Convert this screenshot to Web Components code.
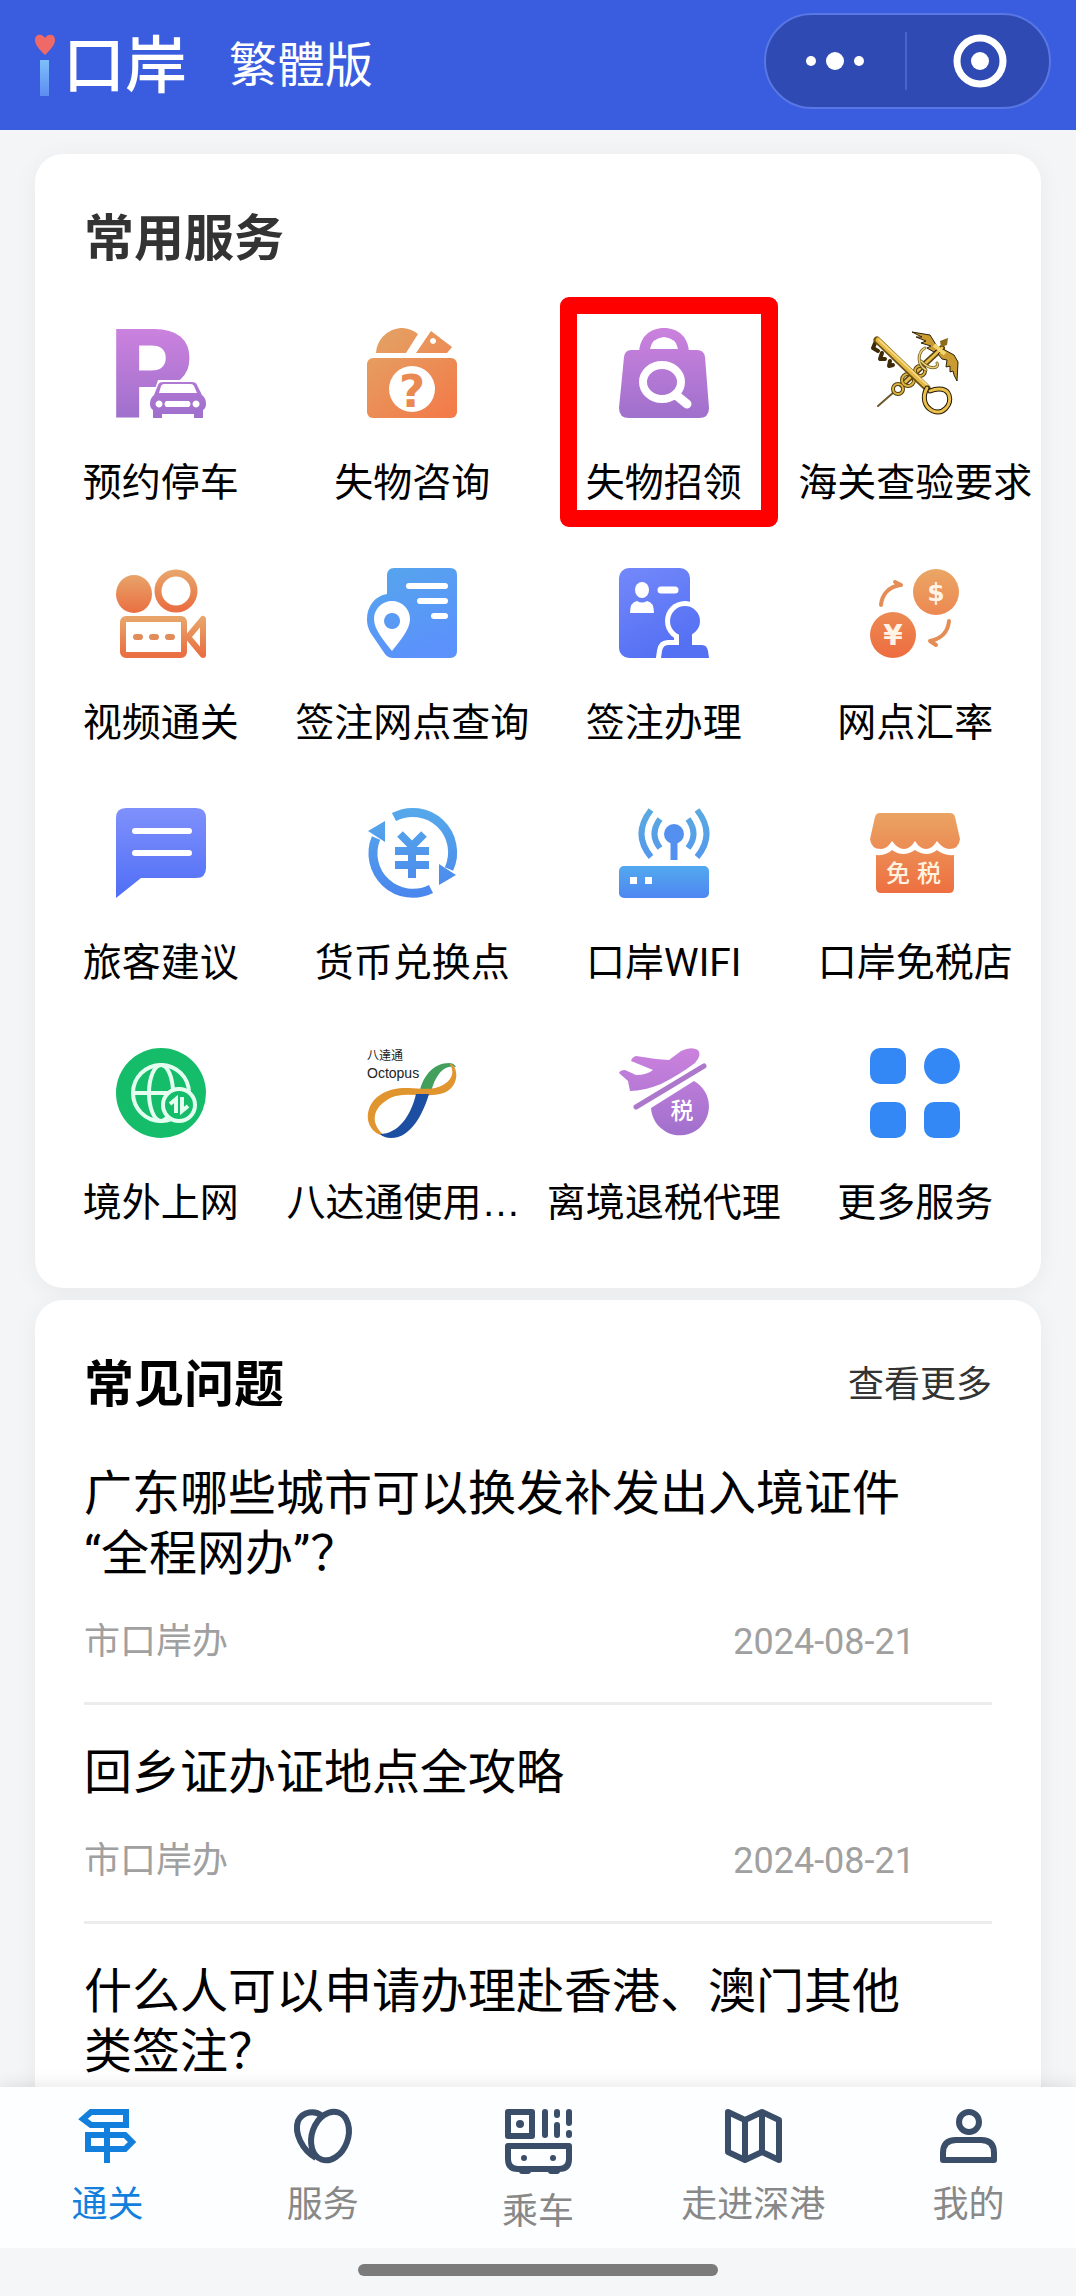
<!DOCTYPE html>
<html lang="zh-CN">
<head>
<meta charset="utf-8">
<meta name="viewport" content="width=device-width, initial-scale=1">
<title>i口岸</title>
<style>
    body {
        margin: 0;
        font-family: Roboto, "Noto Sans CJK SC", sans-serif;
        color: #000;
    }
</style>
</head>
<body>

<port-app>
    <port-header slot="header"></port-header>

    <port-card>
        <span slot="title">常用服务</span>
        <port-services>
            <port-service icon="parking">预约停车</port-service>
            <port-service icon="lost">失物咨询</port-service>
            <port-service icon="bag" marked>失物招领</port-service>
            <port-service icon="customs">海关查验要求</port-service>
            <port-service icon="video">视频通关</port-service>
            <port-service icon="place">签注网点查询</port-service>
            <port-service icon="permit">签注办理</port-service>
            <port-service icon="rate">网点汇率</port-service>
            <port-service icon="advice">旅客建议</port-service>
            <port-service icon="exchange">货币兑换点</port-service>
            <port-service icon="wifi">口岸WIFI</port-service>
            <port-service icon="shop">口岸免税店</port-service>
            <port-service icon="globe">境外上网</port-service>
            <port-service icon="octopus" clipped>八达通使用…</port-service>
            <port-service icon="refund">离境退税代理</port-service>
            <port-service icon="more">更多服务</port-service>
        </port-services>
    </port-card>

    <port-card strong>
        <span slot="title">常见问题</span>
        <port-more slot="action">查看更多</port-more>
        <port-question office="市口岸办" date="2024-08-21">广东哪些城市可以换发补发出入境证件“全程网办”？</port-question>
        <port-question office="市口岸办" date="2024-08-21">回乡证办证地点全攻略</port-question>
        <port-question>什么人可以申请办理赴香港、澳门其他类签注？</port-question>
    </port-card>

    <port-tabs slot="footer">
        <port-tab icon="sign" active>通关</port-tab>
        <port-tab icon="heart">服务</port-tab>
        <port-tab icon="bus">乘车</port-tab>
        <port-tab icon="map">走进深港</port-tab>
        <port-tab icon="user">我的</port-tab>
    </port-tabs>
</port-app>

<script>
const gradient = (from, to, x2 = 0) => `
    <defs>
        <linearGradient id="g" gradientUnits="userSpaceOnUse" x1="0" y1="0" x2="${x2}" y2="90">
            <stop offset="0" stop-color="${from}"/>
            <stop offset="1" stop-color="${to}"/>
        </linearGradient>
    </defs>`;

const purple = gradient("#cb82de", "#9f70cc");
const orange = gradient("#eaa765", "#ee6c3f");
const orangeSide = gradient("#e2a566", "#f27d4b", 70);
const sky = gradient("#55a6ec", "#5b92fb", 40);
const indigo = gradient("#7388fa", "#5470f3", 40);

// all on a 90 x 90 grid
const serviceIcons = {
    parking: `${purple}
        <text x="-11" y="90" font-family="DejaVu Sans" font-weight="bold" font-size="122" fill="url(#g)">P</text>
        <path d="M32 90V76Q32 67 38 64L42 52H84L90 66V90Z" fill="#fff"/>
        <path fill="url(#g)" fill-rule="evenodd" d="M38 67L42 57Q43 54 47 54H76Q80 54 81 57L86 67Q90 70 90 76Q90 80 87 82V90H78V86H46V90H37V82Q34 80 34 76Q34 70 38 67ZM43 65H81L78 58Q77 56 75 56H48Q46 56 45 58ZM43 72.500a3.500 3.500 0 1 0 .1 0ZM80 72.500a3.500 3.500 0 1 0 .1 0ZM50 73q-3 3 0 6H73q3-3 0-6Z"/>`,
    lost: `${orangeSide}
        <path d="M9 25C10 10 22 0 36 0Q45 1 51 6L39 25Z" fill="url(#g)"/>
        <path fill-rule="evenodd" d="M49 25L64 3L85 19L80 25ZM66 10a3 3 0 1 0 .1 0Z" fill="url(#g)"/>
        <rect y="30" width="90" height="60" rx="6" fill="url(#g)"/>
        <circle cx="45" cy="61" r="23" fill="#fff"/>
        <text x="45" y="79" text-anchor="middle" font-family="DejaVu Sans" font-weight="bold" font-size="45" fill="#e88a52">?</text>`,
    bag: `${purple}
        <path d="M20 26C20 9 31 0 45 0S70 9 70 26Z" fill="url(#g)"/>
        <path d="M12 22H78Q85 22 86 29L90 80Q90 90 80 90H10Q0 90 0 80L5 29Q6 22 12 22Z" fill="url(#g)"/>
        <path d="M31 21Q33 10 45 9Q57 10 59 21Z" fill="#fff"/>
        <ellipse cx="43" cy="54" rx="19" ry="17" fill="none" stroke="#fff" stroke-width="8"/>
        <path d="M57 67L68 76" stroke="#fff" stroke-width="9" stroke-linecap="round"/>`,
    customs: `
        <g fill="none" stroke-linecap="round" stroke-linejoin="round">
            <path d="M8 78L24 64" stroke="#6b5a2c" stroke-width="2"/>
            <path d="M32 57L72 20" stroke="#5a4510" stroke-width="6"/>
            <path d="M32 57L72 20" stroke="#e8bd4c" stroke-width="3"/>
            <g stroke="#51400f" stroke-width="4"><circle cx="28" cy="61" r="5"/><circle cx="38" cy="52" r="6"/><circle cx="50" cy="43" r="5"/></g>
            <g stroke="#dfb443" stroke-width="2"><circle cx="28" cy="61" r="5"/><circle cx="38" cy="52" r="6"/><circle cx="50" cy="43" r="5"/></g>
            <path d="M56 42C46 36 48 24 55 20M51 33C60 43 70 40 67 35" stroke="#6a551a" stroke-width="3"/>
            <path d="M56 42C46 36 48 24 55 20M51 33C60 43 70 40 67 35" stroke="#ecd27a" stroke-width="1.500"/>
            <path d="M6 13L3 20L8 23M12 25L10 31L15 31M20 33L19 38L23 37" stroke="#3d2b08" stroke-width="4"/>
            <path d="M7 12L57 60" stroke="#6b5013" stroke-width="7"/>
            <path d="M8 12L57 59" stroke="#e7b843" stroke-width="5"/>
            <path d="M9 12L57 57" stroke="#f7df92" stroke-width="1.500"/>
            <path d="M57 60C52 69 54 79 63 83C73 87 82 77 79 67C77 61 69 59 60 63" stroke="#241805" stroke-width="5"/>
            <path d="M57 60C52 69 54 79 63 83C73 87 82 77 79 67C77 61 69 59 60 63" stroke="#eabf4c" stroke-width="3"/>
        </g>
        <path d="M42 4L60 7L68 20L64 24L57 20L61 18L51 15L56 13L46 9L52 9Z" fill="#c99b30" stroke="#2d210a"/>
        <path d="M73 21L84 27L88 34L87 53L84 47L83 43L80 44L80 38L76 39L77 32L72 31L68 26Z" fill="#c99b30" stroke="#2d210a"/>
        <path d="M70 13L78 10L77 17L71 19Z" fill="#8a6a1c"/>
        <path d="M64 17L75 26" stroke="#f3d46d" stroke-width="4"/>`,
    video: `${orange}
        <defs>
            <linearGradient id="o" x2="0" y2="1"><stop stop-color="#e8a369"/><stop offset="1" stop-color="#ea6f42"/></linearGradient>
        </defs>
        <ellipse cx="18" cy="26" rx="18" ry="19" fill="url(#o)"/>
        <circle cx="60" cy="23" r="18" fill="none" stroke="url(#o)" stroke-width="7"/>
        <rect x="7" y="51" width="61" height="36" rx="3" fill="none" stroke="url(#o)" stroke-width="6"/>
        <path d="M72 69L87 51V87Z" fill="none" stroke="url(#o)" stroke-width="6" stroke-linejoin="round"/>
        <path d="M20 69h4M36 69h4M52 69h4" stroke="#e28c5b" stroke-width="6" stroke-linecap="round"/>`,
    place: `${sky}
        <path fill="url(#g)" d="M20 8Q20 0 27 0H83Q90 0 90 7V83Q90 90 83 90H26Q21 90 18 86L5 67C1 61 0 56 0 51C0 38 8 28 20 26Z"/>
        <path fill="#fff" fill-rule="evenodd" d="M25 33C35 33 43 41 43 51C43 62 32 74 25 83C18 74 7 62 7 51C7 41 15 33 25 33ZM25 45a8 8 0 1 0 .1 0Z"/>
        <path d="M42 18H78M53 33H78M67 48H78" stroke="#fff" stroke-width="6" stroke-linecap="round"/>`,
    permit: `${indigo}
        <rect width="71" height="90" rx="10" fill="url(#g)"/>
        <ellipse cx="23" cy="22" rx="7" ry="8" fill="#fff"/>
        <path d="M11 45Q11 34 18 33Q23 36 28 33Q35 34 35 45Z" fill="#fff"/>
        <path d="M42 22H56" stroke="#fff" stroke-width="7" stroke-linecap="round"/>
        <path d="M60 66V77H49Q44 77 43 83L42 90H90V77H73V66Z" fill="#fff" stroke="#fff" stroke-width="10"/>
        <circle cx="66" cy="53" r="20" fill="#fff"/>
        <g fill="url(#g)"><circle cx="66" cy="53" r="15"/><path d="M60 65V77H49Q44 77 43 83L42 90H90L89 83Q88 77 83 77H73V65Z"/></g>`,
    rate: `${orange}
        <circle cx="66" cy="24" r="23" fill="url(#g)"/>
        <circle cx="23" cy="67" r="23" fill="url(#g)"/>
        <g fill="none" stroke="#e58d57" stroke-width="4" stroke-linecap="round" stroke-linejoin="round">
            <path d="M11 37C12 26 19 19 30 17M25 14L31 17"/>
            <path d="M79 53C78 64 71 71 60 73L66 77"/>
        </g>
        <text x="66" y="33" text-anchor="middle" font-family="DejaVu Sans" font-weight="bold" font-size="25" fill="#fff3e6">$</text>
        <text x="23" y="77" text-anchor="middle" font-family="DejaVu Sans" font-weight="bold" font-size="28" fill="#fff3e6">¥</text>`,
    advice: `${gradient("#7f90fb", "#4f6ef6")}
        <path d="M0 10Q0 0 10 0H80Q90 0 90 10V60Q90 70 80 70H25L0 90Z" fill="url(#g)"/>
        <path d="M19 23H73M19 45H73" stroke="#fff" stroke-width="6" stroke-linecap="round"/>`,
    exchange: `${gradient("#56a9ea", "#4a86ee")}
        <path d="M27 9A40 40 0 0 1 82 61M64 81A40 40 0 0 1 9 30" fill="none" stroke="url(#g)" stroke-width="9"/>
        <path d="M1 23L18 13V34ZM72 56L89 67L72 77Z" fill="url(#g)"/>
        <g fill="none" stroke="url(#g)" stroke-width="8">
            <path d="M33 26L45 38L57 26M45 37V70M28 43H62M28 57H62"/>
        </g>`,
    wifi: `${gradient("#5aaae0", "#4f8af8")}
        <defs>
            <linearGradient id="b" x2="0" y2="1"><stop stop-color="#52a9ee"/><stop offset="1" stop-color="#4f86f2"/></linearGradient>
        </defs>
        <rect y="58" width="90" height="32" rx="5" fill="url(#b)"/>
        <path d="M11 69h7v7h-7zM26 69h7v7h-7z" fill="#fff"/>
        <circle cx="55" cy="26" r="10" fill="#5490f0"/>
        <path d="M55 30V52" stroke="#5490f0" stroke-width="7"/>
        <path d="M41 11Q30 26 41 40M69 11Q80 26 69 40M32 2Q13 26 32 49M78 2Q97 26 78 49" fill="none" stroke="url(#g)" stroke-width="6"/>`,
    shop: `${orange}
        <path fill="url(#g)" d="M10 5H80Q84 5 85 9L90 31Q89 41 79 41Q72 40 67 33Q62 41 56 41Q50 41 45 33Q40 41 34 41Q28 41 22 33Q17 41 11 41Q1 41 0 31L5 9Q6 5 10 5Z"/>
        <path fill="url(#g)" d="M6 47Q16 48 22 42Q33 50 45 42Q57 50 67 42Q74 48 84 47V80Q84 85 79 85H11Q6 85 6 80Z"/>
        <text x="16" y="74" font-family="Noto Sans CJK SC" font-weight="500" font-size="24" fill="#fff3e0">免</text>
        <text x="47" y="74" font-family="Noto Sans CJK SC" font-weight="500" font-size="24" fill="#fff3e0">税</text>`,
    globe: `
        <circle cx="45" cy="45" r="45" fill="#15bd6b"/>
        <g fill="none" stroke="#e4fff0" stroke-width="4">
            <circle cx="45" cy="45" r="28"/>
            <ellipse cx="45" cy="45" rx="12" ry="28"/>
            <path d="M17 45H72"/>
            <circle cx="63" cy="57" r="16" fill="#15bd6b"/>
            <path d="M54 56L60 51V65M66 49V63L72 58"/>
        </g>`,
    octopus: `
        <text x="0" y="12" font-family="Noto Sans CJK TC" font-size="12" fill="#222">八達通</text>
        <text x="0" y="30" font-family="Liberation Sans" font-size="14" fill="#222">Octopus</text>
        <path fill="#42a05c" d="M53 42C57 26 68 15 82 15Q87 15 89 19C79 16 69 24 64 44Z"/>
        <path fill="#e0952f" d="M86 17C93 26 90 46 66 47C48 48 32 44 20 52C4 62 4 77 18 88C4 86-2 73 2 61C7 46 24 39 42 40C56 41 68 42 76 37C86 31 88 23 82 15Z"/>
        <path fill="#1c4ea2" d="M49 46H62C56 66 44 90 24 90Q17 90 13 86C31 86 44 68 49 46Z"/>`,
    refund: `${purple}
        <path fill="url(#g)" d="M50 12L62 3Q72-2 79 2Q83 7 76 15Q60 27 42 36Q25 43 11 43L9 33L0 25Q1 22 6 22L17 27Q28 27 34 22L12 13Q13 9 17 8Q34 11 50 12Z"/>
        <path d="M17 59L85 18" stroke="#ad78cc" stroke-width="5" stroke-linecap="round"/>
        <path d="M32 60L75 33A29 29 0 1 1 32 60Z" fill="url(#g)"/>
        <text x="63" y="71" text-anchor="middle" font-family="Noto Sans CJK SC" font-weight="500" font-size="23" fill="#fff">税</text>`,
    more: `
        <g fill="#3488f6">
            <rect width="36" height="36" rx="10"/>
            <circle cx="72" cy="18" r="18"/>
            <rect y="54" width="36" height="36" rx="10"/>
            <rect x="54" y="54" width="36" height="36" rx="10"/>
        </g>`
};

const tabIcons = {
    sign: {size: [57, 54], art: `
        <path d="M4 10L12 3H47V16H12ZM9 26H46L53 33L46 40H9ZM28 16V54"/>`},
    heart: {size: [57, 54], art: `
        <ellipse cx="36" cy="27" rx="18" ry="25" transform="rotate(20 36 27)"/>
        <path d="M28 7C21 1 9 2 4 12C0 24 8 41 22 49"/>`},
    bus: {size: [67, 61], art: `
        <path d="M3 3H27V27H3ZM3 37H64V50Q64 60 54 60H13Q3 60 3 50Z" stroke-linejoin="round"/>
        <path d="M40 3V26M52 3V6M52 16V26M64 3V14M64 24V26M17 62H23M46 62H52" stroke-linecap="round"/>
        <g fill="currentColor" stroke="none"><circle cx="15" cy="15" r="4"/><circle cx="19" cy="49" r="3"/><circle cx="48" cy="49" r="3"/></g>`},
    map: {size: [57, 54], art: `
        <path d="M3 3L20 11L37 3L54 11V51L37 43L20 51L3 43ZM20 11V51M37 3V43" stroke-linejoin="round"/>`},
    user: {size: [57, 54], art: `
        <circle cx="29" cy="13" r="10"/>
        <path d="M3 51V44Q3 31 16 31H41Q54 31 54 44V51Z" stroke-linejoin="round"/>`}
};

class PortApp extends HTMLElement {
    connectedCallback() {
        this.attachShadow({mode: "open"});
        this.shadowRoot.innerHTML = `
            <style>
                :host {
                    display: flex;
                    flex-direction: column;
                    height: 100vh;
                    background: #f4f5f7;
                }
                main {
                    flex: 1;
                    min-height: 0;
                    display: flex;
                    flex-direction: column;
                    gap: 12px;
                    padding: 24px 35px;
                    overflow-y: auto;
                    scrollbar-width: none;
                }
            </style>
            <slot name="header"></slot>
            <main><slot></slot></main>
            <slot name="footer"></slot>
        `;
    }
}

class PortHeader extends HTMLElement {
    connectedCallback() {
        this.attachShadow({mode: "open"});
        this.shadowRoot.innerHTML = `
            <style>
                :host {
                    display: block;
                    background: #3a5cdf;
                    color: #fff;
                }
                header {
                    display: flex;
                    align-items: center;
                    height: 130px;
                    padding: 0 25px 8px 35px;
                    box-sizing: border-box;
                }
                .logo {
                    display: flex;
                    align-items: center;
                    gap: 8px;
                    margin: 0;
                    font: 500 62px/80px "Noto Sans CJK SC", sans-serif;
                }
                .logo svg { margin-top: 8px; }
                button {
                    border: 0;
                    padding: 0;
                    background: none;
                    color: inherit;
                    cursor: pointer;
                }
                .lang {
                    margin-left: 42px;
                    font: 48px/60px "Noto Sans CJK TC", sans-serif;
                }
                .capsule {
                    display: flex;
                    align-items: center;
                    height: 96px;
                    width: 287px;
                    margin-left: auto;
                    box-sizing: border-box;
                    border: 2px solid #5877e4;
                    border-radius: 48px;
                    background: #2f4ab3;
                }
                .capsule button {
                    flex: 1;
                    display: flex;
                    justify-content: center;
                }
                .capsule button + button {
                    padding-left: 4px;
                    border-left: 2px solid #4a64c8;
                }
                svg { display: block; }
            </style>
            <header>
                <h1 class="logo">
                    <svg width="20" height="62" viewBox="0 0 20 62" role="img" aria-label="i">
                        <defs><linearGradient id="bar" x2="0" y2="1"><stop stop-color="#7cc0fa"/><stop offset="1" stop-color="#5d8cf0"/></linearGradient></defs>
                        <path d="M10 21C5 16 0 11 0 6C0 0 7-1 10 4C13-1 20 0 20 6C20 11 15 16 10 21Z" fill="#ef6a66"/>
                        <rect x="5" y="26" width="9" height="36" fill="url(#bar)"/>
                    </svg>
                    <span>口岸</span>
                </h1>
                <button class="lang" type="button">繁體版</button>
                <div class="capsule">
                    <button type="button" aria-label="菜单">
                        <svg width="60" height="58" viewBox="0 0 60 58" fill="#fff"><circle cx="6" cy="29" r="5"/><circle cx="30" cy="29" r="9"/><circle cx="54" cy="29" r="5"/></svg>
                    </button>
                    <button type="button" aria-label="关闭">
                        <svg width="58" height="58" viewBox="0 0 58 58"><circle cx="29" cy="29" r="23" fill="none" stroke="#fff" stroke-width="7"/><circle cx="29" cy="29" r="9" fill="#fff"/></svg>
                    </button>
                </div>
            </header>
        `;
    }
}

class PortCard extends HTMLElement {
    connectedCallback() {
        this.attachShadow({mode: "open"});
        this.shadowRoot.innerHTML = `
            <style>
                :host {
                    display: block;
                    flex: none;
                    padding: 50px 0 60px;
                    border-radius: 28px;
                    background: #fff;
                    box-shadow: 0 4px 24px rgba(0, 0, 0, 0.05);
                }
                .head {
                    display: flex;
                    align-items: center;
                    justify-content: space-between;
                    padding: 0 49px;
                }
                h2 {
                    margin: 0;
                    font-size: 50px;
                    line-height: 70px;
                    font-weight: bold;
                    color: #333;
                }
                :host([strong]) h2 { color: #000; }
            </style>
            <div class="head">
                <h2><slot name="title"></slot></h2>
                <slot name="action"></slot>
            </div>
            <slot></slot>
        `;
    }
}

class PortMore extends HTMLElement {
    connectedCallback() {
        this.attachShadow({mode: "open"});
        this.shadowRoot.innerHTML = `
            <style>
                :host { display: block; }
                a {
                    font-size: 36px;
                    line-height: 52px;
                    color: #333;
                    text-decoration: none;
                }
            </style>
            <a href="#questions"><slot></slot></a>
        `;
    }
}

class PortServices extends HTMLElement {
    connectedCallback() {
        this.attachShadow({mode: "open"});
        this.shadowRoot.innerHTML = `
            <style>
                :host {
                    display: grid;
                    grid-template-columns: repeat(4, minmax(0, 1fr));
                    row-gap: 60px;
                    margin-top: 54px;
                }
            </style>
            <slot></slot>
        `;
    }
}

class PortService extends HTMLElement {
    connectedCallback() {
        const icon = this.getAttribute("icon");
        this.attachShadow({mode: "open"});
        this.shadowRoot.innerHTML = `
            <style>
                :host {
                    display: block;
                    position: relative;
                }
                a {
                    display: flex;
                    flex-direction: column;
                    align-items: center;
                    gap: 40px;
                    color: inherit;
                    text-decoration: none;
                }
                svg {
                    width: 90px;
                    height: 90px;
                    overflow: visible;
                }
                .label {
                    width: 100%;
                    font-size: 39px;
                    line-height: 50px;
                    text-align: center;
                    white-space: nowrap;
                }
                :host([clipped]) .label {
                    font-family: "Liberation Sans", "Noto Sans CJK SC", sans-serif;
                    text-align: left;
                }
                /* red frame drawn over the highlighted service */
                :host([marked])::after {
                    content: "";
                    position: absolute;
                    inset: -31px 12px -19px 22px;
                    border: 17px solid #fe0000;
                    border-radius: 9px;
                    pointer-events: none;
                }
            </style>
            <a href="#${icon}">
                <svg viewBox="0 0 90 90" aria-hidden="true">${serviceIcons[icon]}</svg>
                <span class="label"><slot></slot></span>
            </a>
        `;
    }
}

class PortQuestion extends HTMLElement {
    connectedCallback() {
        const office = this.getAttribute("office");
        const date = this.getAttribute("date");
        this.attachShadow({mode: "open"});
        this.shadowRoot.innerHTML = `
            <style>
                :host {
                    display: block;
                    margin: 0 49px;
                    border-bottom: 3px solid #ececec;
                }
                :host(:first-of-type) { margin-top: 6px; }
                :host(:last-child) { border-bottom: 0; }
                article { padding: 38px 77px 34px 0; }
                h3 {
                    margin: 0;
                    font-size: 48px;
                    line-height: 60px;
                    font-weight: normal;
                }
                a {
                    color: inherit;
                    text-decoration: none;
                }
                .meta {
                    display: flex;
                    justify-content: space-between;
                    margin-top: 32px;
                    font-size: 36px;
                    line-height: 52px;
                    color: #a0a0a0;
                }
            </style>
            <article>
                <h3><a href="#question"><slot></slot></a></h3>
                ${date ? `<div class="meta"><span>${office}</span><time>${date}</time></div>` : ""}
            </article>
        `;
    }
}

class PortTabs extends HTMLElement {
    connectedCallback() {
        this.attachShadow({mode: "open"});
        this.shadowRoot.innerHTML = `
            <style>
                :host {
                    display: block;
                    position: relative;
                    background: #f5f6f8;
                    box-shadow: 0 -2px 16px rgba(0, 0, 0, 0.1);
                }
                nav {
                    display: flex;
                    height: 161px;
                    background: #fcfeff;
                }
                .home {
                    display: flex;
                    justify-content: center;
                    padding: 16px 0 20px;
                }
                .home span {
                    width: 33.4%;
                    height: 12px;
                    border-radius: 6px;
                    background: #7b7b7b;
                }
            </style>
            <nav><slot></slot></nav>
            <div class="home"><span></span></div>
        `;
    }
}

class PortTab extends HTMLElement {
    connectedCallback() {
        const icon = this.getAttribute("icon");
        const {size: [width, height], art} = tabIcons[icon];
        this.attachShadow({mode: "open"});
        this.shadowRoot.innerHTML = `
            <style>
                :host {
                    flex: 1;
                    display: block;
                    color: #3a4e69;
                }
                a {
                    display: flex;
                    flex-direction: column;
                    align-items: center;
                    gap: 20px;
                    padding-top: 22px;
                    color: inherit;
                    text-decoration: none;
                }
                svg { overflow: visible; }
                span {
                    font-size: 36px;
                    line-height: 44px;
                    color: #888;
                }
                :host([active]), :host([active]) span { color: #137fdd; }
            </style>
            <a href="#${icon}">
                <svg width="${width}" height="${height}" viewBox="0 0 ${width} ${height}" fill="none" stroke="currentColor" stroke-width="6" aria-hidden="true">${art}</svg>
                <span><slot></slot></span>
            </a>
        `;
    }
}

window.customElements.define('port-app', PortApp);
window.customElements.define('port-header', PortHeader);
window.customElements.define('port-card', PortCard);
window.customElements.define('port-more', PortMore);
window.customElements.define('port-services', PortServices);
window.customElements.define('port-service', PortService);
window.customElements.define('port-question', PortQuestion);
window.customElements.define('port-tabs', PortTabs);
window.customElements.define('port-tab', PortTab);
</script>
</body>
</html>
